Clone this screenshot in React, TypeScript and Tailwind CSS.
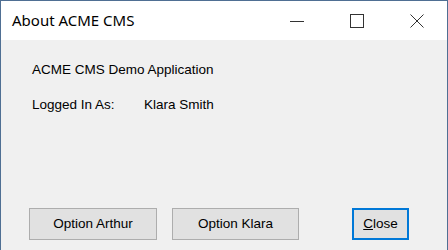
export default function App() {
  return (
    <div className="flex h-[250px] w-[448px] flex-col border-x border-t border-[#4f6f93] bg-[#f0f0f0] font-['Liberation_Sans',Arial,sans-serif] text-black">
      {/* title bar */}
      <div className="flex h-[39px] items-center bg-white">
        <span className="pl-[11px] font-['Noto_Sans',sans-serif] text-[15px] text-black">About ACME CMS</span>
        <div className="ml-auto flex h-full">
          <div className="flex w-[60px] items-center justify-center">
            <svg width="14" height="14" viewBox="0 0 14 14">
              <line x1="0" y1="7.5" x2="14" y2="7.5" stroke="#333" strokeWidth="1" />
            </svg>
          </div>
          <div className="flex w-[60px] items-center justify-center">
            <svg width="14" height="14" viewBox="0 0 14 14">
              <rect x="0.5" y="0.5" width="13" height="13" fill="none" stroke="#333" strokeWidth="1" />
            </svg>
          </div>
          <div className="flex w-[60px] items-center justify-center">
            <svg width="14" height="14" viewBox="0 0 14 14">
              <path d="M0.5 0.5 L13.5 13.5 M13.5 0.5 L0.5 13.5" stroke="#333" strokeWidth="1" fill="none" />
            </svg>
          </div>
        </div>
      </div>

      {/* body */}
      <div className="flex flex-1 flex-col px-[28px] pt-[22px] text-[13.5px] leading-[16px]">
        <div className="pl-[3px]">ACME CMS Demo Application</div>
        <div className="mt-[19px] flex pl-[3px]">
          <span className="w-[112px]">Logged In As:</span>
          <span>Klara Smith</span>
        </div>

        <div className="mt-auto mb-[10px] flex items-center">
          <button className="h-[32px] w-[128px] border border-[#adadad] bg-[#e1e1e1]">Option Arthur</button>
          <button className="ml-[15px] h-[32px] w-[127px] border border-[#adadad] bg-[#e1e1e1]">Option Klara</button>
          <button className="ml-auto mr-[10px] h-[32px] w-[57px] border-2 border-[#0078d7] bg-[#e1e1e1]">
            <span className="underline">C</span>lose
          </button>
        </div>
      </div>
    </div>
  );
}
